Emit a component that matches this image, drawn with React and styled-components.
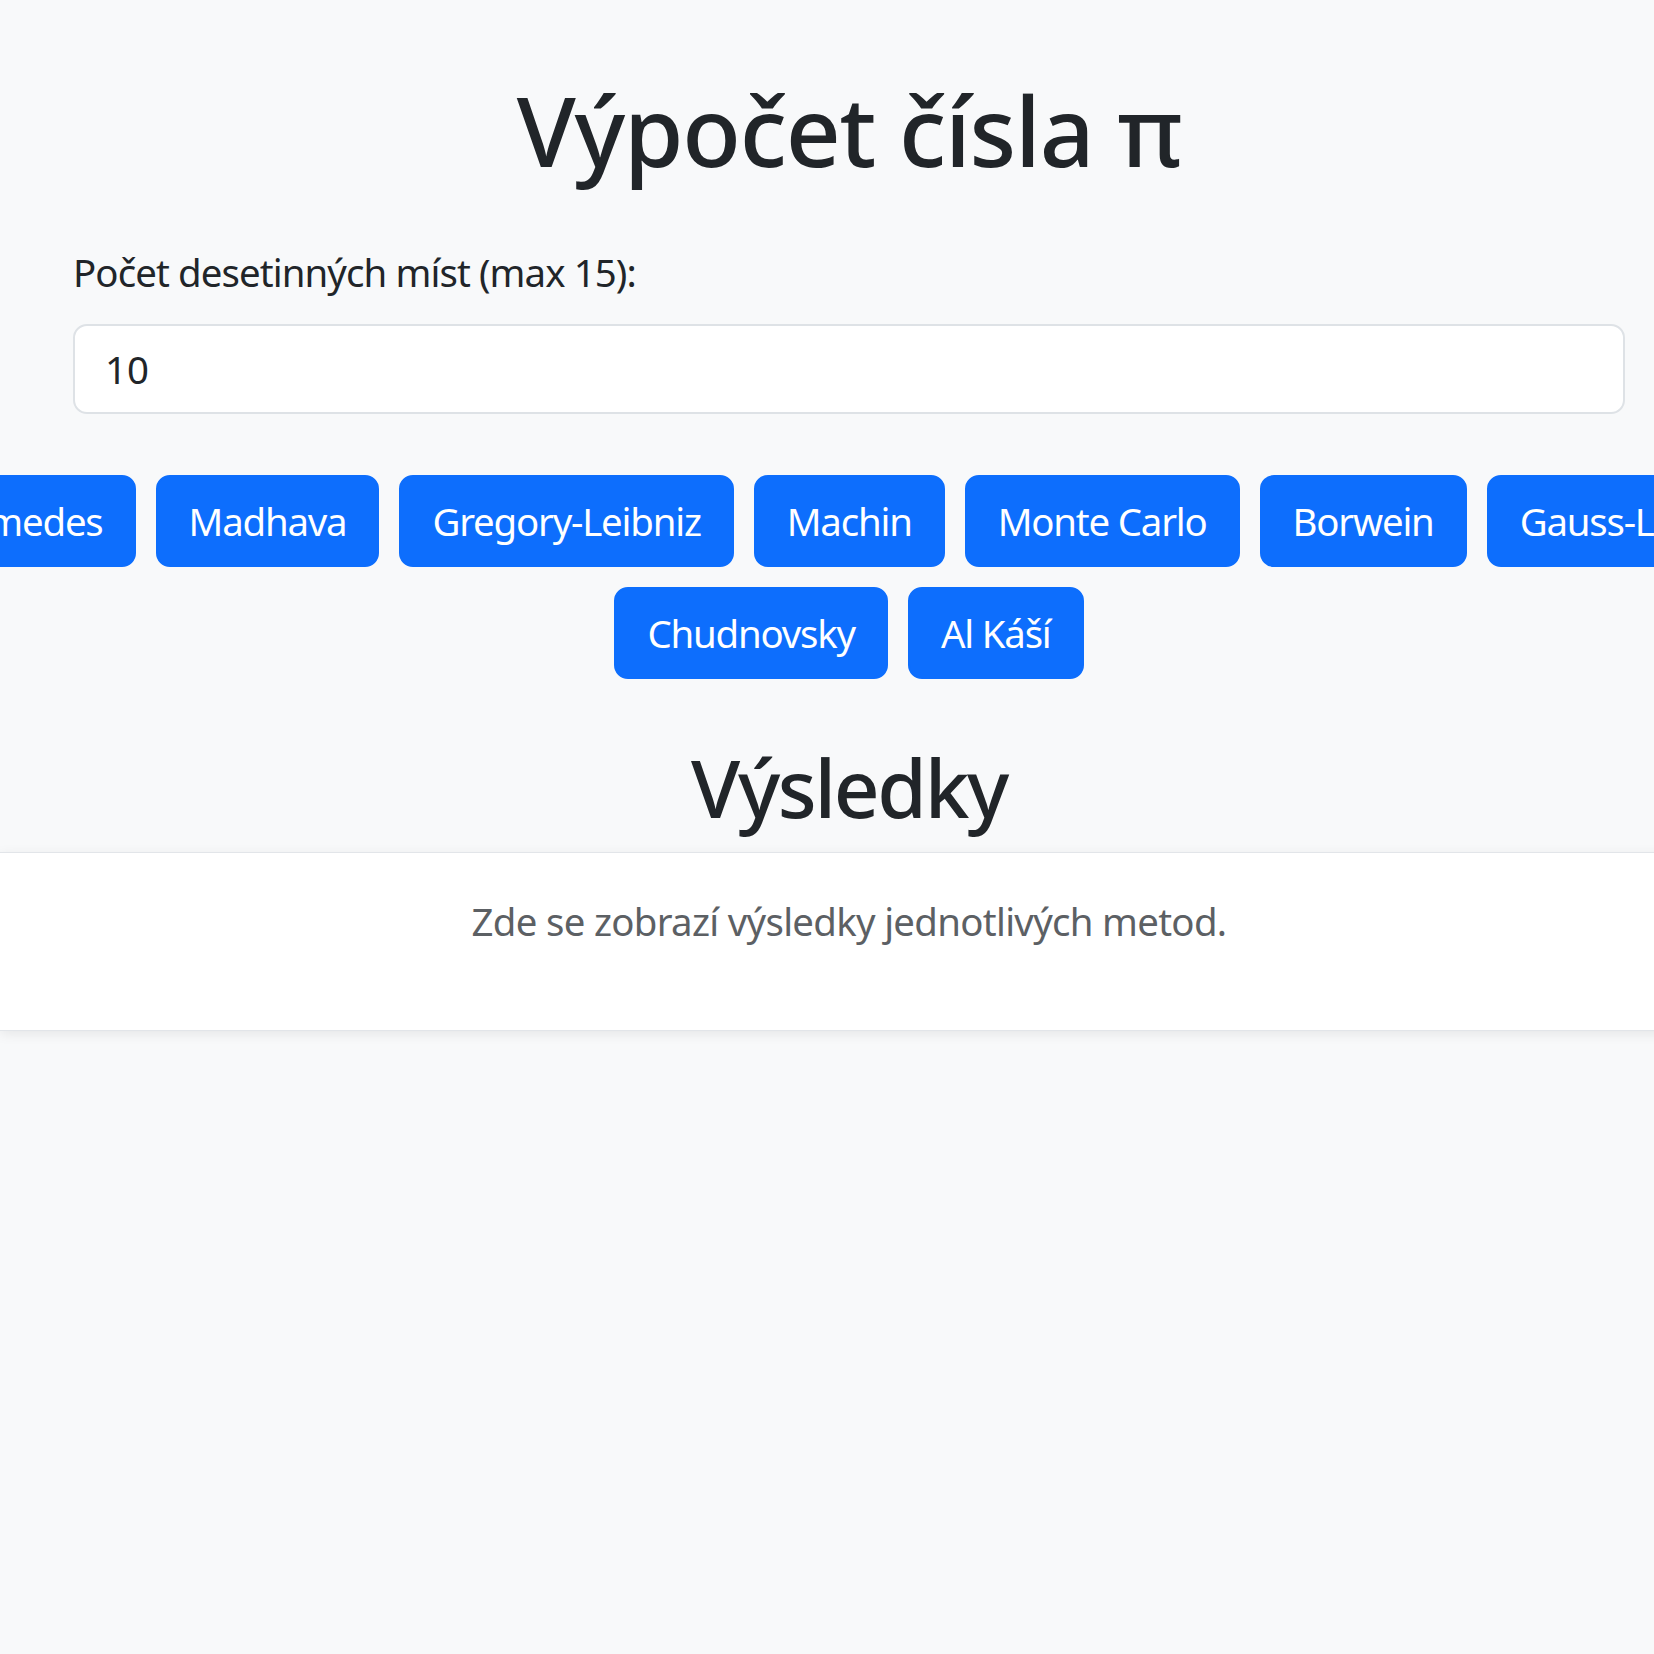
import React from 'react';
import styled, { createGlobalStyle } from 'styled-components';

const GlobalStyle = createGlobalStyle`
  html, body {
    margin: 0;
    padding: 0;
    background: #f8f9fa;
    overflow: hidden;
  }
  body {
    font-family: "Noto Sans", "Open Sans", sans-serif;
    color: #212529;
  }
`

// the page is wider than the window, as in the screenshot
const Page = styled.div`
  width: 1698px;
  min-height: 1654px;
  padding-top: 72px;
  box-sizing: border-box;
`

const Container = styled.div`
  padding: 0 73px;
`

const Title = styled.h1`
  margin: 0;
  font-size: 96px;
  font-weight: 500;
  line-height: 1.2;
  text-align: center;
  letter-spacing: -1.2px;
`

const Field = styled.div`
  margin-top: 57px;
  display: flex;
  flex-direction: column;
  gap: 22px;
`

const Label = styled.label`
  font-size: 38.4px;
  line-height: 1.5;
  letter-spacing: -0.9px;
`

const Input = styled.input`
  box-sizing: border-box;
  height: 90px;
  width: 100%;
  padding: 0 30px;
  font-family: inherit;
  font-size: 38.4px;
  color: #212529;
  background: #fff;
  border: 2px solid #dee2e6;
  border-radius: 14px;
  outline: none;
`

const Buttons = styled.div`
  margin-top: 61px;
  display: flex;
  flex-direction: column;
  gap: 20px;
`

const ButtonRow = styled.div`
  display: flex;
  flex-wrap: nowrap;
  justify-content: center;
  gap: 20px;
`

const MethodButton = styled.button`
  flex: none;
  box-sizing: border-box;
  height: 92px;
  padding: 0 31px;
  font-family: inherit;
  font-size: 38.4px;
  letter-spacing: -1.2px;
  color: #fff;
  background: #0d6efd;
  border: 2px solid #0d6efd;
  border-radius: 14px;
  white-space: nowrap;
  cursor: pointer;
`

const ResultsTitle = styled.h2`
  margin: 60px 0 17px;
  font-size: 80px;
  font-weight: 500;
  line-height: 1.2;
  text-align: center;
  letter-spacing: -2.3px;
`

const ResultsCard = styled.div`
  background: #fff;
  border-top: 1px solid #e2e5e9;
  border-bottom: 1px solid #e2e5e9;
  box-shadow: 0 3px 12px rgba(0, 0, 0, 0.08);
  padding: 40px 38px 42px;
`

const Placeholder = styled.p`
  margin: 0 0 38px;
  text-align: center;
  font-size: 38.4px;
  line-height: 1.5;
  letter-spacing: -0.7px;
  color: #5c6064;
`

const rows = [
  ['Archimedes', 'Madhava', 'Gregory-Leibniz', 'Machin', 'Monte Carlo', 'Borwein', 'Gauss-Legendre'],
  ['Chudnovsky', 'Al Káší'],
]

export default function App() {
  return (
    <>
      <GlobalStyle />
      <Page>
        <Container>
          <Title>Výpočet čísla π</Title>
          <Field>
            <Label htmlFor="digits">Počet desetinných míst (max 15):</Label>
            <Input id="digits" type="number" defaultValue={10} />
          </Field>
        </Container>
        <Buttons>
          {rows.map((row, i) => (
            <ButtonRow key={i}>
              {row.map((name) => (
                <MethodButton key={name}>{name}</MethodButton>
              ))}
            </ButtonRow>
          ))}
        </Buttons>
        <ResultsTitle>Výsledky</ResultsTitle>
        <ResultsCard>
          <Placeholder>Zde se zobrazí výsledky jednotlivých metod.</Placeholder>
        </ResultsCard>
      </Page>
    </>
  );
}
